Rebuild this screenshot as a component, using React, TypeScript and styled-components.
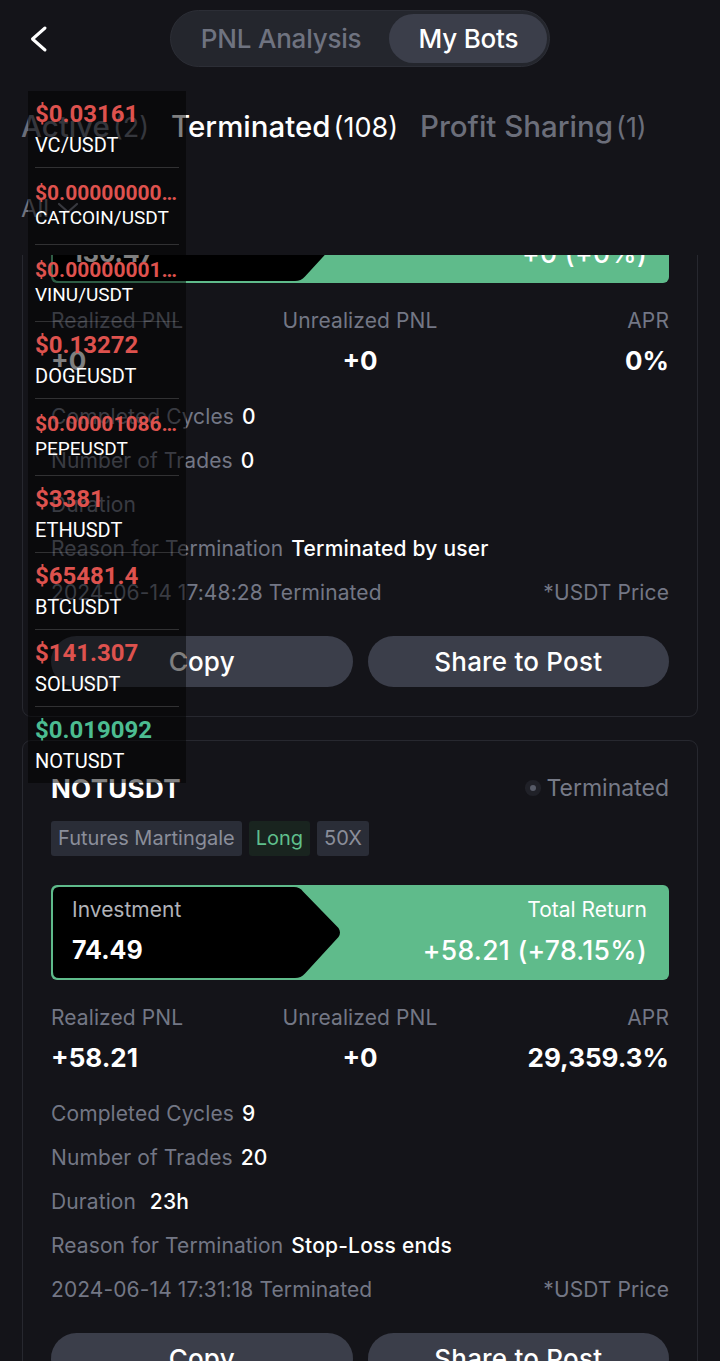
import React, { FC, useLayoutEffect, useRef } from 'react';
import styled, { createGlobalStyle } from 'styled-components';

const GlobalStyle = createGlobalStyle`
  html, body {
    margin: 0;
    padding: 0;
    background: #141419;
  }

  body {
    font-family: Inter, "Noto Sans", sans-serif;
    color: #fff;
  }

  * {
    box-sizing: border-box;
  }
`;

interface Ticker {
  price: string;
  pair: string;
  up?: boolean;
  compact?: boolean;
}

interface Bot {
  pair: string;
  tags: { label: string; long?: boolean }[];
  investment: string;
  totalReturn: string;
  realized: string;
  unrealized: string;
  apr: string;
  cycles: string;
  trades: string;
  duration: string;
  reason: string;
  time: string;
}

const tickers: Ticker[] = [
  { price: '$0.03161', pair: 'VC/USDT' },
  { price: '$0.0000000088', pair: 'CATCOIN/USDT', compact: true },
  { price: '$0.0000000123', pair: 'VINU/USDT', compact: true },
  { price: '$0.13272', pair: 'DOGEUSDT' },
  { price: '$0.0000108612', pair: 'PEPEUSDT', compact: true },
  { price: '$3381', pair: 'ETHUSDT' },
  { price: '$65481.4', pair: 'BTCUSDT' },
  { price: '$141.307', pair: 'SOLUSDT' },
  { price: '$0.019092', pair: 'NOTUSDT', up: true }
];

const bots: Bot[] = [
  {
    pair: 'DOGEUSDT',
    tags: [{ label: 'Futures Martingale' }, { label: 'Long', long: true }, { label: '20X' }],
    investment: '136.47',
    totalReturn: '+0 (+0%)',
    realized: '+0',
    unrealized: '+0',
    apr: '0%',
    cycles: '0',
    trades: '0',
    duration: '',
    reason: 'Terminated by user',
    time: '2024-06-14 17:48:28 Terminated'
  },
  {
    pair: 'NOTUSDT',
    tags: [{ label: 'Futures Martingale' }, { label: 'Long', long: true }, { label: '50X' }],
    investment: '74.49',
    totalReturn: '+58.21 (+78.15%)',
    realized: '+58.21',
    unrealized: '+0',
    apr: '29,359.3%',
    cycles: '9',
    trades: '20',
    duration: '\u00a023h',
    reason: 'Stop-Loss ends',
    time: '2024-06-14 17:31:18 Terminated'
  }
];

const Screen = styled.div`
  position: relative;
  width: 720px;
  height: 1361px;
  display: flex;
  flex-direction: column;
  overflow: hidden;
  background: #141419;
`;

const NavBar = styled.div`
  flex-shrink: 0;
  display: grid;
  grid-template-columns: 1fr auto 1fr;
  align-items: center;
  height: 77px;
  padding: 10px 0;
`;

const BackButton = styled.div`
  display: flex;
  align-items: center;
  padding-left: 30px;
`;

const Segmented = styled.div`
  display: flex;
  padding: 3px 2px;
  border: 1px solid #2c2e36;
  border-radius: 29px;
  background: #24262d;
`;

const Segment = styled.div<{ $active?: boolean }>`
  height: 49px;
  padding: 0 ${(p) => (p.$active ? '29px' : '28px')};
  border-radius: 25px;
  font-size: 26px;
  font-weight: 500;
  line-height: 49px;
  letter-spacing: -0.2px;
  color: ${(p) => (p.$active ? '#ffffff' : '#6f7380')};
  background: ${(p) => (p.$active ? '#3b3e4a' : 'transparent')};
`;

const Tabs = styled.div`
  flex-shrink: 0;
  display: flex;
  gap: 22px;
  height: 48px;
  margin-top: 25px;
  padding-left: 21px;
`;

const Tab = styled.div<{ $active?: boolean }>`
  display: flex;
  align-items: baseline;
  line-height: 48px;
  white-space: nowrap;
  color: ${(p) => (p.$active ? '#ffffff' : '#6b6e7a')};

  b {
    font-size: 29.5px;
    font-weight: 500;
  }

  span {
    margin-left: 3px;
    font-size: 27px;
    font-weight: 400;
  }
`;

const Filter = styled.div`
  flex-shrink: 0;
  display: flex;
  align-items: center;
  gap: 8px;
  height: 34px;
  margin: 41px 0 30px;
  padding-left: 21px;
  font-size: 24px;
  color: #70737f;
`;

const Viewport = styled.div`
  flex: 1;
  overflow-y: scroll;
  scrollbar-width: none;

  &::-webkit-scrollbar {
    display: none;
  }
`;

const List = styled.div`
  display: flex;
  flex-direction: column;
  gap: 23px;
  padding: 0 22px 60px;
`;

const Card = styled.div`
  border: 1px solid #27282f;
  border-radius: 9px;
  padding: 30px 28px 29px;
`;

const TitleRow = styled.div`
  display: flex;
  align-items: center;
  justify-content: space-between;
  height: 34px;
`;

const Title = styled.div`
  font-size: 26px;
  font-weight: 700;
  letter-spacing: 0.3px;
`;

const Status = styled.div`
  display: flex;
  align-items: center;
  gap: 11px;
  font-size: 23px;
  color: #767a87;

  &::before {
    content: '';
    width: 6px;
    height: 6px;
    border-radius: 50%;
    background: #575b68;
    box-shadow: 0 0 0 5px #202128;
  }
`;

const Tags = styled.div`
  display: flex;
  gap: 7px;
  margin-top: 16px;
`;

const Tag = styled.div<{ $long?: boolean }>`
  height: 35px;
  padding: 0 7px;
  border-radius: 3px;
  font-size: 20px;
  line-height: 35px;
  color: ${(p) => (p.$long ? '#5fbf8c' : '#8a8e9a')};
  background: ${(p) => (p.$long ? '#19241f' : '#2a2d37')};
`;

const InvestBar = styled.div`
  position: relative;
  display: flex;
  justify-content: space-between;
  height: 95px;
  margin-top: 29px;
  padding: 11px 22px 0 21px;
  border-radius: 6px;
  background: #5fbb8b;

  svg {
    position: absolute;
    top: 0;
    left: 0;
  }
`;

const BarColumn = styled.div<{ $right?: boolean }>`
  position: relative;
  display: flex;
  flex-direction: column;
  align-items: ${(p) => (p.$right ? 'flex-end' : 'flex-start')};
`;

const BarLabel = styled.div<{ $light?: boolean }>`
  font-size: 21px;
  line-height: 28px;
  color: ${(p) => (p.$light ? '#ffffff' : '#b1b3b9')};
`;

const BarValue = styled.div<{ $bold?: boolean }>`
  margin-top: 9px;
  font-size: ${(p) => (p.$bold ? '25px' : '26.5px')};
  font-weight: ${(p) => (p.$bold ? 700 : 500)};
  line-height: 34px;
  letter-spacing: ${(p) => (p.$bold ? '0' : '0.3px')};
`;

const Stats = styled.div`
  display: grid;
  grid-template-columns: 1fr 1fr 1fr;
  margin-top: 24px;
`;

const Stat = styled.div<{ $align: 'left' | 'center' | 'right' }>`
  display: flex;
  flex-direction: column;
  text-align: ${(p) => p.$align};
`;

const Label = styled.span`
  font-size: 21px;
  line-height: 28px;
  letter-spacing: 0.1px;
  color: #737785;
  white-space: nowrap;
`;

const StatValue = styled.div`
  margin-top: 9px;
  font-size: 26px;
  font-weight: 700;
  line-height: 34px;
`;

const Details = styled.div`
  display: flex;
  flex-direction: column;
  gap: 16px;
  margin-top: 25px;
`;

const Row = styled.div`
  display: flex;
  align-items: center;
  justify-content: space-between;
  height: 28px;
`;

const Pair = styled.div`
  display: flex;
  gap: 8px;
`;

const Value = styled.span`
  font-size: 21px;
  font-weight: 500;
  line-height: 28px;
  letter-spacing: 0.2px;
  white-space: pre;
`;

const Actions = styled.div`
  display: grid;
  grid-template-columns: 1fr 1fr;
  gap: 15px;
  margin-top: 29px;
`;

const ActionButton = styled.div`
  height: 51px;
  border-radius: 26px;
  background: #3b3e4a;
  font-size: 26px;
  font-weight: 500;
  line-height: 51px;
  letter-spacing: 0.2px;
  text-align: center;
`;

const Ticker = styled.div`
  position: absolute;
  top: 91px;
  left: 28px;
  z-index: 10;
  width: 158px;
  padding: 0 7px;
  background: rgba(0, 0, 0, 0.5);
  font-family: Roboto, "Liberation Sans", sans-serif;
`;

const TickerItem = styled.div<{ $compact?: boolean }>`
  height: 77px;
  padding-top: ${(p) => (p.$compact ? '12px' : '9px')};
  border-bottom: 1px solid rgba(255, 255, 255, 0.16);

  &:last-child {
    height: 76px;
    border-bottom: none;
  }
`;

const TickerPrice = styled.div<{ $up?: boolean; $compact?: boolean }>`
  overflow: hidden;
  font-size: ${(p) => (p.$compact ? '21px' : '24px')};
  font-weight: 700;
  line-height: ${(p) => (p.$compact ? '26px' : '28px')};
  color: ${(p) => (p.$up ? '#4cbc91' : '#de524e')};
  white-space: nowrap;
  text-overflow: ellipsis;
`;

const TickerPair = styled.div<{ $compact?: boolean }>`
  margin-top: ${(p) => (p.$compact ? '1px' : '5px')};
  font-size: ${(p) => (p.$compact ? '19px' : '20px')};
  line-height: ${(p) => (p.$compact ? '22px' : '24px')};
  color: #ffffff;
`;

const BotCard: FC<{ bot: Bot }> = ({ bot }) => (
  <Card>
    <TitleRow>
      <Title>{bot.pair}</Title>
      <Status>Terminated</Status>
    </TitleRow>
    <Tags>
      {bot.tags.map((tag) => (
        <Tag
          $long={tag.long}
          key={tag.label}>
          {tag.label}
        </Tag>
      ))}
    </Tags>
    <InvestBar>
      <svg
        height='95'
        viewBox='0 0 618 95'
        width='618'>
        <path
          d='M8 2 H243 Q249 2 252 6.5 L287.5 43 Q290.5 47.5 287.5 52 L254 88.5 Q250 93 244 93 H8 Q2 93 2 87 V8 Q2 2 8 2 Z'
          fill='#000' />
      </svg>
      <BarColumn>
        <BarLabel>Investment</BarLabel>
        <BarValue $bold>{bot.investment}</BarValue>
      </BarColumn>
      <BarColumn $right>
        <BarLabel $light>Total Return</BarLabel>
        <BarValue>{bot.totalReturn}</BarValue>
      </BarColumn>
    </InvestBar>
    <Stats>
      <Stat $align='left'>
        <Label>Realized PNL</Label>
        <StatValue>{bot.realized}</StatValue>
      </Stat>
      <Stat $align='center'>
        <Label>Unrealized PNL</Label>
        <StatValue>{bot.unrealized}</StatValue>
      </Stat>
      <Stat $align='right'>
        <Label>APR</Label>
        <StatValue>{bot.apr}</StatValue>
      </Stat>
    </Stats>
    <Details>
      <Row>
        <Pair><Label>Completed Cycles</Label><Value>{bot.cycles}</Value></Pair>
      </Row>
      <Row>
        <Pair><Label>Number of Trades</Label><Value>{bot.trades}</Value></Pair>
      </Row>
      <Row>
        <Pair><Label>Duration</Label><Value>{bot.duration}</Value></Pair>
      </Row>
      <Row>
        <Pair><Label>Reason for Termination</Label><Value>{bot.reason}</Value></Pair>
      </Row>
      <Row>
        <Label>{bot.time}</Label>
        <Label>*USDT Price</Label>
      </Row>
    </Details>
    <Actions>
      <ActionButton>Copy</ActionButton>
      <ActionButton>Share to Post</ActionButton>
    </Actions>
  </Card>
);

const App: FC = () => {
  const viewport = useRef<HTMLDivElement>(null);

  // the list is shown scrolled part way into the first card
  useLayoutEffect(() => {
    if (viewport.current) {
      viewport.current.scrollTop = 212;
    }
  }, []);

  return (
    <Screen>
      <GlobalStyle />
      <NavBar>
        <BackButton>
          <svg
            fill='none'
            height='28'
            viewBox='0 0 18 28'
            width='18'>
            <polyline
              points='15,3 2.5,14 15,25'
              stroke='#fff'
              strokeLinecap='round'
              strokeLinejoin='round'
              strokeWidth='3' />
          </svg>
        </BackButton>
        <Segmented>
          <Segment>PNL Analysis</Segment>
          <Segment $active>My Bots</Segment>
        </Segmented>
        <div />
      </NavBar>
      <Tabs>
        <Tab><b>Active</b><span>(2)</span></Tab>
        <Tab $active><b>Terminated</b><span>(108)</span></Tab>
        <Tab><b>Profit Sharing</b><span>(1)</span></Tab>
      </Tabs>
      <Filter>
        All
        <svg
          fill='none'
          height='12'
          viewBox='0 0 22 12'
          width='22'>
          <polyline
            points='2,2 11,10 20,2'
            stroke='#70737f'
            strokeLinecap='round'
            strokeLinejoin='round'
            strokeWidth='2.2' />
        </svg>
      </Filter>
      <Viewport ref={viewport}>
        <List>
          {bots.map((bot) => (
            <BotCard
              bot={bot}
              key={bot.pair} />
          ))}
        </List>
      </Viewport>
      <Ticker>
        {tickers.map((item) => (
          <TickerItem
            $compact={item.compact}
            key={item.pair}>
            <TickerPrice
              $compact={item.compact}
              $up={item.up}>
              {item.price}
            </TickerPrice>
            <TickerPair $compact={item.compact}>{item.pair}</TickerPair>
          </TickerItem>
        ))}
      </Ticker>
    </Screen>
  );
};

export default App;
